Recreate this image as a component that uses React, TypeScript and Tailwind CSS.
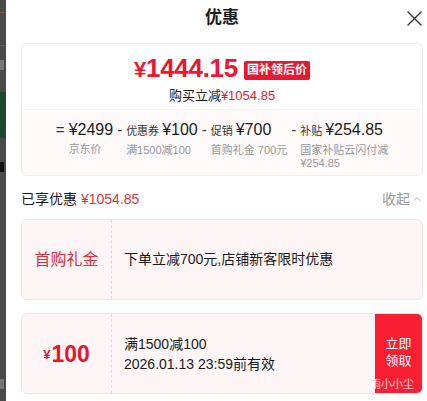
import { ChevronUp } from "lucide-react";

const font = { fontFamily: '"Liberation Sans", "Noto Sans CJK SC", sans-serif' };

const parts = [
  { sign: "=", label: "", value: "¥2499", note: ["京东价"] },
  { sign: "-", label: "优惠券", value: "¥100", note: ["满1500减100"] },
  { sign: "-", label: "促销", value: "¥700", note: ["首购礼金 700元"] },
  { sign: "-", label: "补贴", value: "¥254.85", note: ["国家补贴云闪付减", "¥254.85"] },
];

function Backdrop() {
  // sliver of the page behind the sheet
  return (
    <div className="flex w-[6px] shrink-0 flex-col bg-[#4a4a4a]">
      <div className="mt-[12px] h-px bg-[#8a4a4a]" />
      <div className="mt-[32px] h-px bg-[#8a4a4a]" />
      <div className="mt-[14px] h-[10px] w-[4px] bg-[#777]" />
      <div className="mt-[22px] h-[46px] bg-[#1d4a2c]" />
      <div className="mt-[24px] h-[10px] w-[4px] bg-[#111]" />
      <div className="mt-auto mb-[12px] h-[10px] w-[4px] bg-[#777]" />
    </div>
  );
}

export default function App() {
  return (
    <div className="flex h-[401px] w-[427px] overflow-hidden bg-white text-[#1a1a1a]" style={font}>
      <Backdrop />

      <div className="flex min-w-0 flex-1 flex-col pl-[15px] pr-[4px]">
        {/* header */}
        <div className="relative flex h-[43px] shrink-0 justify-center pt-[8px]">
          <span className="text-[17px] font-bold leading-[20px] text-[#1a1a1a]">优惠</span>
          <svg
            className="absolute right-[1px] top-[11px]"
            width="15"
            height="15"
            viewBox="0 0 15 15"
            fill="none"
            stroke="#333"
            strokeWidth="1.4"
            strokeLinecap="round"
          >
            <path d="M1 1 14 14M14 1 1 14" />
          </svg>
        </div>

        {/* summary card */}
        <div className="h-[133px] shrink-0 overflow-hidden rounded-[6px] border border-[#ededed]">
          <div className="flex h-[65px] flex-col items-center bg-white pt-[10px]">
            <div className="flex h-[30px] items-center">
              <span className="text-[26px] font-bold leading-[30px] tracking-[-0.3px] text-[#ee1530]">
                <span className="text-[22px]">¥</span>1444.15
              </span>
              <span className="ml-[6px] mt-[2px] rounded-[2px] bg-[#ee1530] px-[3px] text-[12px] font-bold leading-[19px] text-white">
                国补领后价
              </span>
            </div>
            <div className="mt-[4px] text-[13px] leading-[16px]">
              购买立减<span className="text-[#e51c2c]">¥1054.85</span>
            </div>
          </div>

          <div className="flex h-[68px] justify-center gap-[4px] border-t border-[#fbeeee] bg-[#fffafa] pt-[9px]">
            {parts.map((p) => (
              <div key={p.value + p.label} className="flex">
                <span className="mr-[4px] text-[15px] leading-[22px] text-[#333]">{p.sign}</span>
                <div className="flex flex-col">
                  <div className="flex items-baseline leading-[22px]">
                    {p.label && <span className="mr-[3px] text-[11px] text-[#333]">{p.label}</span>}
                    <span className="text-[16px] text-[#1a1a1a]">{p.value}</span>
                  </div>
                  <div className="mt-[2px] max-w-[90px] text-[11px] leading-[13px] text-[#999]">
                    {p.note.map((n) => (
                      <div key={n}>{n}</div>
                    ))}
                  </div>
                </div>
              </div>
            ))}
          </div>
        </div>

        {/* saved total */}
        <div className="mt-[14px] flex h-[18px] items-center justify-between text-[14px] leading-[18px]">
          <span>
            已享优惠 <span className="text-[#e2313b]">¥1054.85</span>
          </span>
          <span className="flex items-center text-[#999]">
            收起
            <ChevronUp className="ml-[1px] h-[12px] w-[12px]" strokeWidth={1.5} />
          </span>
        </div>

        {/* first-purchase gift */}
        <div className="mt-[11px] flex h-[81px] shrink-0 overflow-hidden rounded-[6px] border border-[#f4e3e6] bg-[#fdf5f6]">
          <div className="flex w-[90px] shrink-0 items-center justify-center border-r border-dashed border-[#ead6da]">
            <span className="text-[16px] text-[#e0303d]">首购礼金</span>
          </div>
          <div className="flex items-center pl-[12px] text-[14px]">下单立减700元,店铺新客限时优惠</div>
        </div>

        {/* coupon */}
        <div className="relative mt-[13px] flex h-[81px] shrink-0 overflow-hidden rounded-[6px] border border-[#f4e3e6] bg-[#fdf5f6]">
          <div className="flex w-[90px] shrink-0 items-center justify-center border-r border-dashed border-[#ead6da] font-bold text-[#e8152b]">
            <span className="mt-[3px] text-[13px]">¥</span>
            <span className="ml-[1px] text-[23px] leading-[28px]">100</span>
          </div>
          <div className="flex flex-1 flex-col justify-center pl-[12px] text-[14px] leading-[20px]">
            <span>满1500减100</span>
            <span>2026.01.13 23:59前有效</span>
          </div>
          <div className="flex w-[47px] shrink-0 flex-col items-center justify-center bg-[#fa1e32] pb-[4px] text-[13px] leading-[17px] text-white">
            <span>立即</span>
            <span>领取</span>
          </div>
          <span className="absolute bottom-[2px] right-[8px] text-[11px] leading-[14px] text-white/80">雨小小尘</span>
        </div>
      </div>
    </div>
  );
}
